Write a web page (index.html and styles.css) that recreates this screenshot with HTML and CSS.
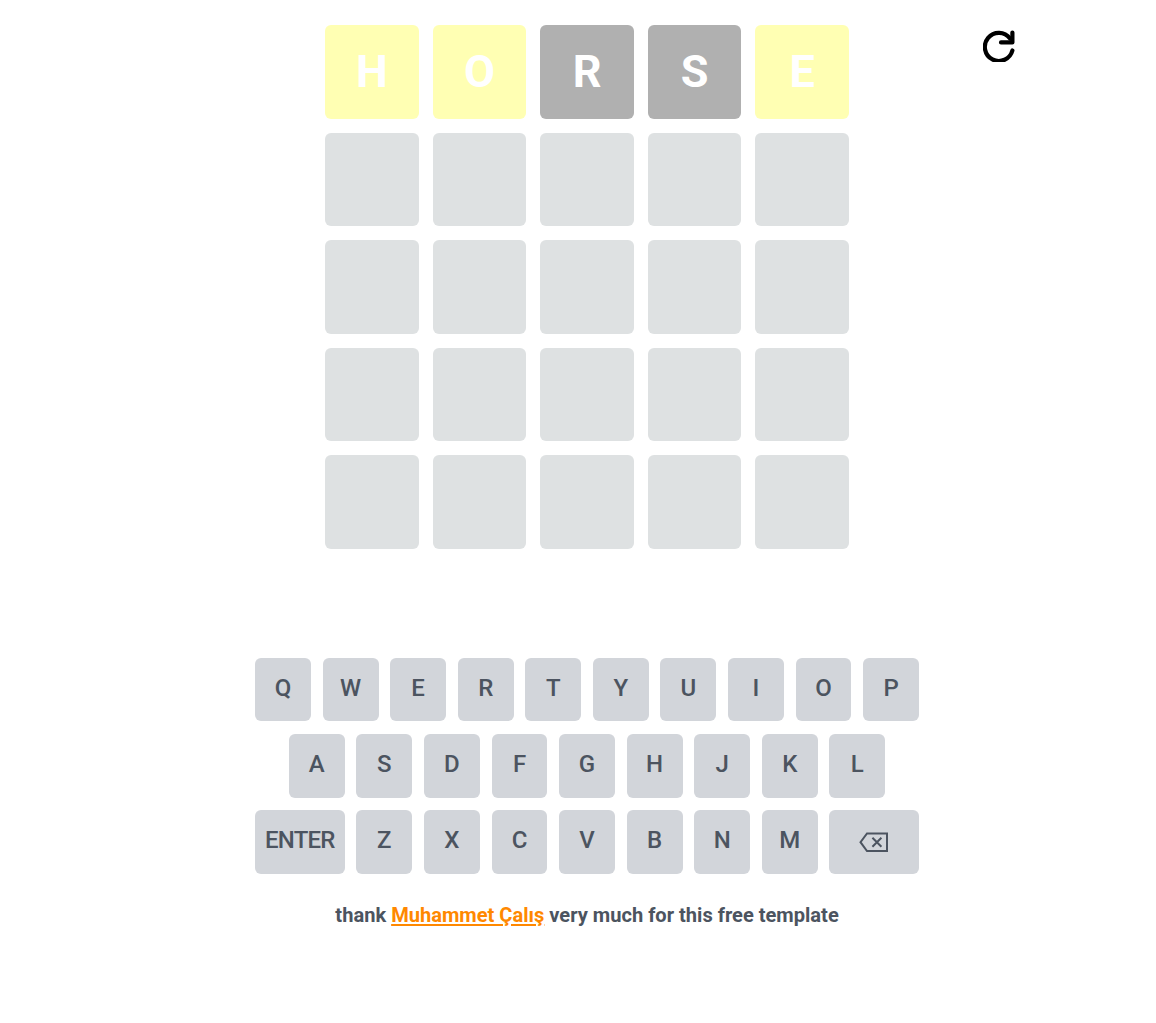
FILE: index.html
```html
<!DOCTYPE html>
<html lang="en">
<head>
    <meta charset="UTF-8">
    <meta name="viewport" content="width=device-width, initial-scale=1.0">
    <title>Wordle</title>
    <link rel="stylesheet" href="styles.css">
</head>
<body>
    <div class="page">
        <main class="game">
            <div class="board">
                <div class="cell present">H</div>
                <div class="cell present">O</div>
                <div class="cell absent">R</div>
                <div class="cell absent">S</div>
                <div class="cell present">E</div>
                <div class="cell"></div><div class="cell"></div><div class="cell"></div><div class="cell"></div><div class="cell"></div>
                <div class="cell"></div><div class="cell"></div><div class="cell"></div><div class="cell"></div><div class="cell"></div>
                <div class="cell"></div><div class="cell"></div><div class="cell"></div><div class="cell"></div><div class="cell"></div>
                <div class="cell"></div><div class="cell"></div><div class="cell"></div><div class="cell"></div><div class="cell"></div>
            </div>

            <div class="keyboard">
                <div class="key-row">
                    <button class="key">Q</button>
                    <button class="key">W</button>
                    <button class="key">E</button>
                    <button class="key">R</button>
                    <button class="key">T</button>
                    <button class="key">Y</button>
                    <button class="key">U</button>
                    <button class="key">I</button>
                    <button class="key">O</button>
                    <button class="key">P</button>
                </div>
                <div class="key-row">
                    <button class="key">A</button>
                    <button class="key">S</button>
                    <button class="key">D</button>
                    <button class="key">F</button>
                    <button class="key">G</button>
                    <button class="key">H</button>
                    <button class="key">J</button>
                    <button class="key">K</button>
                    <button class="key">L</button>
                </div>
                <div class="key-row">
                    <button class="key wide enter">ENTER</button>
                    <button class="key">Z</button>
                    <button class="key">X</button>
                    <button class="key">C</button>
                    <button class="key">V</button>
                    <button class="key">B</button>
                    <button class="key">N</button>
                    <button class="key">M</button>
                    <button class="key wide backspace" aria-label="Backspace">
                        <svg class="backspace-icon" viewBox="0 0 30 20" fill="none" stroke="currentColor" stroke-width="2">
                            <path d="M8 1.5H28V19H8L1.5 10.2Z"/>
                            <path d="M13.4 5.7L22.4 14.7M22.4 5.7L13.4 14.7"/>
                        </svg>
                    </button>
                </div>
            </div>

            <p class="thanks">thank <a href="#">Muhammet Çalış</a> very much for this free template</p>
        </main>

        <button class="reload" aria-label="Restart">
            <svg viewBox="0 0 32 32" fill="none" stroke="#000" stroke-width="4.2" stroke-linecap="round" stroke-linejoin="round">
                <path d="M27 8.5A14 14 0 1 0 29.4 20.5"/>
                <path d="M29.4 2.6V12.4H18"/>
            </svg>
        </button>
    </div>
</body>
</html>
```

FILE: styles.css
```css
* { box-sizing: border-box; }
body { margin: 0; background: #fff; font-family: Roboto, Arial, sans-serif; color: #4c5460; }

.page { display: flex; align-items: flex-start; padding: 25px 0 0 255px; }
.game { width: 664.12px; flex: none; }

.board { display: grid; grid-template-columns: repeat(5, 93.6px); grid-auto-rows: 93.6px; gap: 14px; justify-content: center; }
.cell { display: flex; align-items: center; justify-content: center; background: #dee1e2; border-radius: 6px; color: #fff; font-size: 45px; font-weight: 700; }
.cell.present { background: #ffffb3; }
.cell.absent { background: #b0b0b0; }

.keyboard { display: flex; flex-direction: column; gap: 12.4px; margin-top: 108.6px; }
.key-row { display: flex; justify-content: center; gap: 11.7px; }
.key { display: flex; align-items: center; justify-content: center; width: 55.88px; height: 63.8px; padding: 0 0 3px; border: none; border-radius: 6px; background: #d2d5da; color: #4c5460; font-family: inherit; font-size: 24px; font-weight: 500; cursor: pointer; }
.key.wide { width: 89.69px; }
.key.enter { letter-spacing: -0.8px; }
.key.backspace { padding: 0; }
.backspace-icon { display: block; width: 30px; height: 20px; }

.thanks { margin: 29.2px 0 0; text-align: center; font-size: 20.08px; line-height: 24px; font-weight: 700; }
.thanks a { color: #ff8800; }

.reload { display: block; width: 32px; height: 32px; margin: 5px 0 0 64px; padding: 0; border: none; background: none; cursor: pointer; }
.reload svg { display: block; width: 32px; height: 32px; }
```
